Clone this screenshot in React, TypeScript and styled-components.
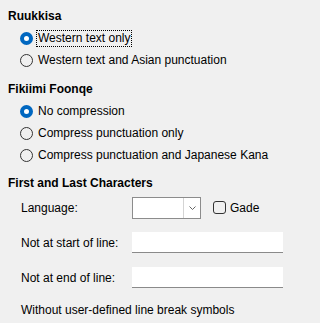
import React, { FC } from 'react';
import styled, { createGlobalStyle } from 'styled-components';

const GlobalStyle = createGlobalStyle`
  html, body {
    margin: 0;
    padding: 0;
    background: #f0f0f0;
  }
  body {
    font-family: "Liberation Sans", Arial, sans-serif;
    font-size: 12px;
    color: #000;
  }
`;

const Page = styled.div`
  width: 292px;
  height: 323px;
  box-sizing: border-box;
  padding: 8px 8px 0 8px;
  display: flex;
  flex-direction: column;
`;

const Section = styled.section<{ $gap?: number }>`
  display: flex;
  flex-direction: column;
  margin-bottom: ${p => p.$gap ?? 0}px;
`;

const Heading = styled.div`
  font-weight: bold;
  line-height: 16px;
  height: 16px;
`;

const OptionList = styled.div<{ $gap: number; $top: number }>`
  display: flex;
  flex-direction: column;
  padding-left: 12px;
  margin-top: ${p => p.$top}px;
  gap: ${p => p.$gap}px;
`;

const RadioRow = styled.label`
  display: flex;
  align-items: center;
  height: 16px;
  gap: 4px;
`;

const RadioDot = styled.span<{ $on?: boolean }>`
  box-sizing: border-box;
  width: 13px;
  height: 13px;
  border-radius: 50%;
  flex: none;
  background: ${p => (p.$on ? '#fff' : 'transparent')};
  border: ${p => (p.$on ? '4px solid #0067c0' : '1px solid #333')};
`;

const OptionText = styled.span<{ $focus?: boolean }>`
  padding: 0 1px;
  outline: ${p => (p.$focus ? '1px dotted #000' : 'none')};
  outline-offset: 0;
  line-height: 15px;
`;

const FieldGrid = styled.div`
  display: grid;
  grid-template-columns: 111px 1fr;
  grid-auto-rows: 21px;
  align-items: center;
  padding-left: 13px;
  margin-top: 6px;
  row-gap: 14px;
`;

const FieldLabel = styled.span``;

const LangControls = styled.div`
  display: flex;
  align-items: center;
  gap: 12px;
`;

const Combo = styled.div`
  box-sizing: border-box;
  width: 69px;
  height: 22px;
  background: #fff;
  border: 1px solid #8c8c8c;
  display: flex;
  justify-content: flex-end;
`;

const ComboButton = styled.div`
  box-sizing: border-box;
  width: 17px;
  height: 100%;
  border-left: 1px solid #d4d4d4;
  display: flex;
  align-items: center;
  justify-content: center;
`;

const CheckRow = styled.label`
  display: flex;
  align-items: center;
  gap: 4px;
`;

const CheckBox = styled.span`
  box-sizing: border-box;
  width: 13px;
  height: 13px;
  border: 1px solid #333;
  border-radius: 3px;
`;

const TextField = styled.div`
  box-sizing: border-box;
  width: 151px;
  height: 21px;
  background: #fff;
  border-bottom: 1px solid #8a8a8a;
`;

const Note = styled.div`
  padding-left: 13px;
  margin-top: 14px;
  line-height: 16px;
`;

const Radio: FC<{ label: string; on?: boolean; focus?: boolean }> = ({ label, on, focus }) => (
  <RadioRow>
    <RadioDot $on={on} />
    <OptionText $focus={focus}>{label}</OptionText>
  </RadioRow>
);

export default function App() {
  return (
    <>
      <GlobalStyle />
      <Page>
        <Section $gap={12}>
          <Heading>Ruukkisa</Heading>
          <OptionList $top={6} $gap={6.5}>
            <Radio label="Western text only" on focus />
            <Radio label="Western text and Asian punctuation" />
          </OptionList>
        </Section>
        <Section $gap={11.5}>
          <Heading>Fikiimi Foonqe</Heading>
          <OptionList $top={7} $gap={6}>
            <Radio label="No compression" on />
            <Radio label="Compress punctuation only" />
            <Radio label="Compress punctuation and Japanese Kana" />
          </OptionList>
        </Section>
        <Section>
          <Heading>First and Last Characters</Heading>
          <FieldGrid>
            <FieldLabel>Language:</FieldLabel>
            <LangControls>
              <Combo>
                <ComboButton>
                  <svg width="7" height="4" viewBox="0 0 7 4">
                    <path d="M0.5 0.5 L3.5 3.5 L6.5 0.5" fill="none" stroke="#666" strokeWidth="1" />
                  </svg>
                </ComboButton>
              </Combo>
              <CheckRow>
                <CheckBox />
                <span>Gade</span>
              </CheckRow>
            </LangControls>
            <FieldLabel>Not at start of line:</FieldLabel>
            <TextField />
            <FieldLabel>Not at end of line:</FieldLabel>
            <TextField />
          </FieldGrid>
          <Note>Without user-defined line break symbols</Note>
        </Section>
      </Page>
    </>
  );
}
